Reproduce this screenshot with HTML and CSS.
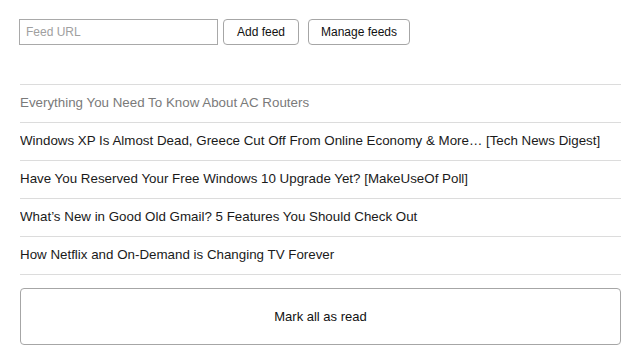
FILE: index.html
```html
<!DOCTYPE html>
<html>
<head>
<meta charset="utf-8">
<link rel="stylesheet" href="styles.css">
</head>
<body>
<div class="app">
  <form class="toolbar">
    <input class="url" type="text" placeholder="Feed URL">
    <button class="btn add" type="button">Add feed</button>
    <button class="btn manage" type="button">Manage feeds</button>
  </form>
  <ul class="feed">
    <li class="item read">Everything You Need To Know About AC Routers</li>
    <li class="item">Windows XP Is Almost Dead, Greece Cut Off From Online Economy &amp; More… [Tech News Digest]</li>
    <li class="item">Have You Reserved Your Free Windows 10 Upgrade Yet? [MakeUseOf Poll]</li>
    <li class="item">What’s New in Good Old Gmail? 5 Features You Should Check Out</li>
    <li class="item">How Netflix and On-Demand is Changing TV Forever</li>
  </ul>
  <button class="btn markall" type="button">Mark all as read</button>
</div>
</body>
</html>
```

FILE: styles.css
```css
html, body {
  margin: 0;
  padding: 0;
  background: #fff;
}
body {
  font-family: "Liberation Sans", Arial, sans-serif;
  color: #222;
}
.app {
  padding: 19px 19px 0 20px;
}
.toolbar {
  display: flex;
  align-items: center;
  height: 26px;
  margin: 0;
}
.url {
  box-sizing: border-box;
  width: 199px;
  height: 26px;
  margin: 0 0 0 -1px;
  padding: 0 6px;
  border: 1px solid #a9a9a9;
  border-radius: 0;
  font-family: inherit;
  font-size: 12px;
  color: #222;
  outline: none;
}
.url::placeholder {
  color: #a0a0a0;
}
.btn {
  box-sizing: border-box;
  background: #fff;
  border: 1px solid #a6a6a6;
  border-radius: 4px;
  font-family: inherit;
  font-size: 12px;
  color: #111;
  padding: 0;
  cursor: pointer;
}
.add {
  width: 76px;
  height: 26px;
  margin-left: 5px;
}
.manage {
  width: 102px;
  height: 26px;
  margin-left: 9px;
}
.feed {
  list-style: none;
  margin: 39px 0 0 0;
  padding: 0;
  border-top: 1px solid #dcdcdc;
}
.item {
  height: 37px;
  line-height: 36px;
  border-bottom: 1px solid #dcdcdc;
  font-size: 13.35px;
  color: #1a1a1a;
  white-space: nowrap;
  overflow: hidden;
}
.item.read {
  color: #7a7a7a;
}
.markall {
  display: block;
  width: 601px;
  height: 57px;
  margin-top: 13px;
  font-size: 13px;
}
```
